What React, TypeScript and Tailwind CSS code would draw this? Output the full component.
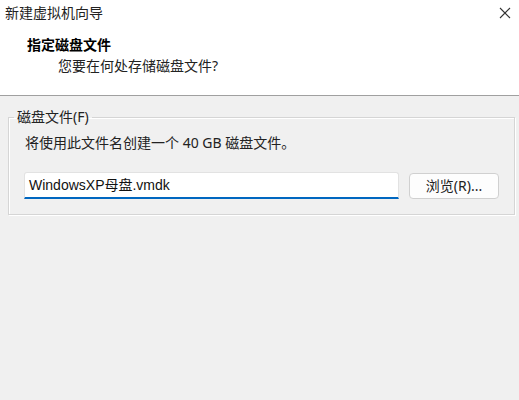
import React from 'react';

const font = '"Noto Sans", "Noto Sans CJK SC", sans-serif';

export default function App() {
  return (
    <div
      className="w-[519px] h-[400px] bg-[#f0f0f0] text-[#1a1a1a] overflow-hidden flex flex-col"
      style={{ fontFamily: font }}
    >
      {/* header */}
      <div className="h-[96px] bg-white border-b border-[#a0a0a0] flex flex-col">
        <div className="h-[25px] flex items-center justify-between pl-[5px] pr-[8px]">
          <span className="text-[14px] leading-none text-[#222]">新建虚拟机向导</span>
          <svg width="12" height="12" viewBox="0 0 12 12" className="text-[#333]">
            <path d="M1 1 L11 11 M11 1 L1 11" stroke="currentColor" strokeWidth="1.1" />
          </svg>
        </div>
        <div className="pl-[27px] pt-[10px] text-[14px] font-bold leading-[20px] text-black">
          指定磁盘文件
        </div>
        <div className="pl-[58px] pt-[1px] text-[14px] leading-[20px] text-[#222]">
          您要在何处存储磁盘文件?
        </div>
      </div>

      <fieldset className="mx-[8px] mt-[11px] border border-[#d5d5d5] shadow-[inset_1px_1px_0_#ffffff,1px_1px_0_#ffffff] px-[15px] pt-[6px] pb-[15px]">
        <legend className="ml-[-10px] px-[3px] text-[14px] leading-[20px] text-[#222]">磁盘文件(F)</legend>
        <div className="text-[14px] leading-[20px] text-[#222] pl-[1px]">
          将使用此文件名创建一个 40 GB 磁盘文件。
        </div>
        <div className="mt-[19px] flex items-center gap-[10px]">
          <div className="w-[375px] h-[27px] bg-white border border-[#e2e2e2] border-b-2 border-b-[#0067c0] rounded-t-[3px] flex items-center pl-[4px]">
            <span
              className="text-[14px] leading-none text-[#111]"
              style={{ fontFamily: '"Liberation Sans", "Noto Sans CJK SC", sans-serif' }}
            >
              WindowsXP母盘.vmdk
            </span>
          </div>
          <button className="w-[90px] h-[26px] bg-[#fdfdfd] border border-[#d0d0d0] rounded-[4px] text-[14px] leading-none text-[#222] flex items-center justify-center">
            浏览(R)...
          </button>
        </div>
      </fieldset>
    </div>
  );
}
